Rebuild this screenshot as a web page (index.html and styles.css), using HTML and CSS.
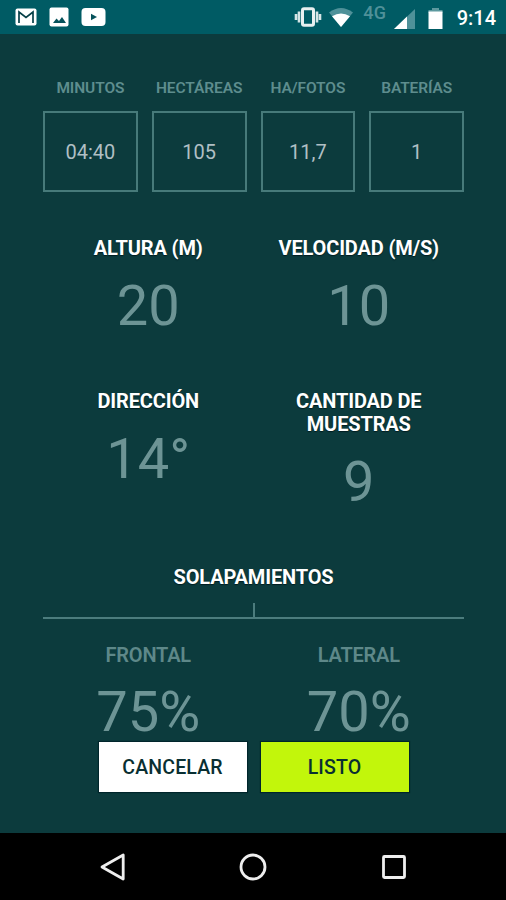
FILE: index.html
```html
<!DOCTYPE html>
<html lang="es">
<head>
<meta charset="utf-8">
<meta name="viewport" content="width=device-width, initial-scale=1">
<title>Plan de vuelo</title>
<link rel="stylesheet" href="styles.css">
</head>
<body>
<div class="screen">
  <header class="status">
    <div class="notices">
      <svg width="22" height="18" viewBox="0 0 22 18"><rect x=".5" y=".5" width="21" height="17" rx="2" fill="#fff"/><path d="M4 15V4l7 5.500L18 4v11" fill="none" stroke="#063f47" stroke-width="1.700"/></svg>
      <svg width="20" height="20" viewBox="0 0 20 20"><rect x=".5" y=".5" width="19" height="19" rx="2" fill="#fff"/><path d="M4 16l3.500-4.500 2.500 2.500 3-4 4 6z" fill="#06525b"/></svg>
      <svg width="25" height="20" viewBox="0 0 25 20"><rect x=".5" y="1" width="24" height="18" rx="4" fill="#fff"/><path d="M10 6.800v6.400l6-3.200z" fill="#06525b"/></svg>
    </div>
    <div class="signals">
      <svg class="vibrate" width="28" height="20" viewBox="0 0 28 20"><path d="M2 7v6M5 4.500v11M23 4.500v11M26 7v6" stroke="#d5e5e6" stroke-width="2.600"/><rect x="8.500" y="1.700" width="11" height="16.600" rx="1.500" fill="none" stroke="#e8f0f0" stroke-width="3"/></svg>
      <svg class="wifi" width="24" height="19" viewBox="0 0 24 19"><path d="M0 4.500Q12-4.500 24 4.500L12 19z" fill="#4f9199"/><path d="M3 8.300Q12 2.500 21 8.300L12 19z" fill="#fff"/></svg>
      <span class="network">4G</span>
      <svg class="cell" width="21" height="20" viewBox="0 0 21 20"><path d="M21 0v20H0z" fill="#4f9199"/><path d="M13 7.600V20H0z" fill="#fff"/></svg>
      <svg class="battery" width="15" height="21" viewBox="0 0 15 21"><path d="M4 0h7v2h3.500v3H.5V2H4z" fill="#5d999f"/><path d="M.5 3.500h14V21H.5z" fill="#fff"/></svg>
      <span class="clock">9:14</span>
    </div>
  </header>

  <main class="content">
    <section class="summary">
      <div class="metric"><h3>MINUTOS</h3><p>04:40</p></div>
      <div class="metric"><h3>HECTÁREAS</h3><p>105</p></div>
      <div class="metric"><h3>HA/FOTOS</h3><p>11,7</p></div>
      <div class="metric"><h3>BATERÍAS</h3><p>1</p></div>
    </section>

    <section class="pair flight">
      <div class="stat"><h2>ALTURA (M)</h2><p>20</p></div>
      <div class="stat"><h2>VELOCIDAD (M/S)</h2><p>10</p></div>
    </section>
    <section class="pair sampling">
      <div class="stat"><h2>DIRECCIÓN</h2><p>14°</p></div>
      <div class="stat"><h2>CANTIDAD DE<br>MUESTRAS</h2><p>9</p></div>
    </section>

    <h2 class="overlap-title">SOLAPAMIENTOS</h2>
    <div class="divider"><span class="tick"></span></div>
    <section class="pair overlap">
      <div class="stat"><h3>FRONTAL</h3><p>75%</p></div>
      <div class="stat"><h3>LATERAL</h3><p>70%</p></div>
    </section>

    <div class="actions">
      <button class="cancel">CANCELAR</button>
      <button class="done">LISTO</button>
    </div>
  </main>

  <nav class="navbar">
    <svg width="28" height="30" viewBox="0 0 28 30"><path d="M24.200 3v24L3 15z"/></svg>
    <svg width="28" height="30" viewBox="0 0 28 30"><circle cx="14" cy="15" r="12"/></svg>
    <svg width="28" height="30" viewBox="0 0 28 30"><rect x="3.500" y="4.500" width="21" height="21" rx="1"/></svg>
  </nav>
</div>
</body>
</html>
```

FILE: styles.css
```css
* { box-sizing: border-box; }
body, h2, h3, p { margin: 0; }
body { font-family: Roboto, "Liberation Sans", sans-serif; background: #0c3b3d; }
svg { display: block; flex: none; }

.screen { width: 506px; height: 900px; display: flex; flex-direction: column; overflow: hidden; }

.status { flex: none; height: 34px; background: #005b64; display: flex; justify-content: space-between; padding: 0 10px 0 15px; }
.notices { display: flex; align-items: center; gap: 12px; }
.signals { display: flex; align-items: center; color: #fff; }
.wifi { margin-left: 7px; }
.network { margin-left: 10px; margin-bottom: 9px; font-size: 18px; line-height: 20px; font-weight: 500; letter-spacing: .5px; color: #4f9199; }
.cell { margin-left: 7px; margin-top: 3px; }
.battery { margin-left: 13px; margin-top: 2px; }
.clock { margin-left: 14px; margin-top: 2px; font-size: 20px; line-height: 24px; font-weight: 500; }

.content { flex: 1; padding: 0 42px 0 43px; }

.summary { display: grid; grid-template-columns: repeat(4, 1fr); column-gap: 14px; padding-top: 43px; }
.metric h3 { text-align: center; white-space: nowrap; font-size: 15.500px; line-height: 22px; font-weight: 600; letter-spacing: -.1px; color: #5e8d8e; }
.metric p { margin-top: 12px; height: 81px; border: 2px solid #477a7a; display: flex; align-items: center; justify-content: center; font-size: 20px; color: #b0bfc4; }

.pair { display: grid; grid-template-columns: 1fr 1fr; text-align: center; }
.pair h2, .overlap-title { font-size: 20px; line-height: 23px; font-weight: 700; letter-spacing: -.15px; color: #fff; text-shadow: 0 1px 1px #001d20; }
.stat p { margin-top: 13px; font-size: 56px; line-height: 66px; color: #6d9495; }
.flight { margin-top: 45px; }
.sampling { margin-top: 51px; }

.overlap-title { margin-top: 51px; text-align: center; }
.divider { height: 16px; margin-top: 14px; border-bottom: 2px solid #4c7c7d; display: flex; justify-content: center; }
.tick { width: 2px; height: 14px; background: #4c7c7d; }
.overlap { margin-top: 24px; }
.overlap h3 { font-size: 20px; line-height: 24px; font-weight: 600; letter-spacing: -.2px; color: #5e8889; }
.overlap p { margin-top: 12px; }

.actions { display: flex; justify-content: center; gap: 14px; margin-top: -3px; position: relative; }
.actions button { width: 148px; height: 50px; padding: 2px 0 0; border: 0; box-shadow: 0 0 1px 1px #00252b; font: 500 19.500px/24px Roboto, sans-serif; letter-spacing: .15px; color: #092f32; }
.actions .cancel { background: #fff; }
.actions .done { background: #c2f60b; }

.navbar { flex: none; height: 67px; background: #000; display: flex; justify-content: center; gap: 112.500px; align-items: center; }
.navbar svg { fill: none; stroke: #eee; stroke-width: 2.800; stroke-linejoin: round; }
```
